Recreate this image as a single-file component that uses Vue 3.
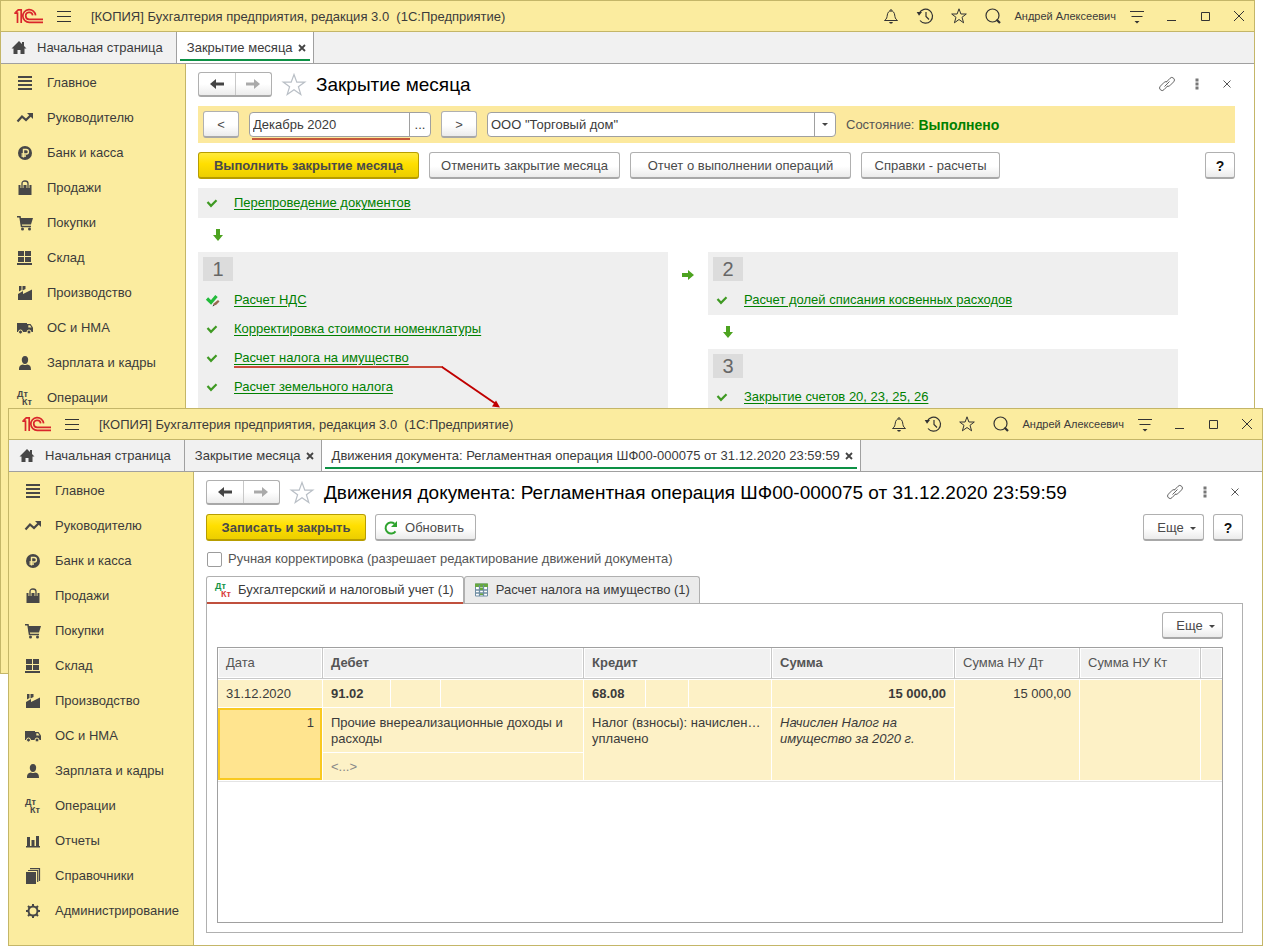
<script setup>
import { ref } from 'vue'

const icons = {
  logo: '<g fill="none" stroke="#d9262b" stroke-width="1.7"><path d="M.3 4.2h3.2V14M1.600 3.400 4.300.9h2.900V14"/><path d="M21.600 6.400A6.400 6.400 0 1 0 15.400 13.400H29M18.700 6.400A3.500 3.500 0 1 0 15.400 10.400H29"/></g>',
  burger: '<path d="M1 3.5h14M1 8.5h14M1 13.5h14" stroke="#333" fill="none"/>',
  bell: '<path d="M1.5 12.5h13c-2.5-1.7-2.4-3.2-2.8-5.500C11.300 4.500 10.300 3 8 3S4.700 4.500 4.300 7c-.4 2.300-.3 3.800-2.800 5.500zM7 3c0-2 2-2 2 0" fill="none" stroke="#333"/><path d="M6 14h4l-1 1.500H7z" fill="#333"/>',
  clock: '<path d="M2.300 5A7 7 0 1 1 3 12.500M9 4v4.500l3 3" fill="none" stroke="#333" stroke-width="1.200"/><path d="M-.3 4h5.300L2 7.800z" fill="#333"/>',
  star: '<path d="M8 .8 9.900 6h5.400L11 9.300l1.600 5.500L8 11.500l-4.600 3.300L5 9.300.7 6h5.400z" fill="none" stroke="#333"/>',
  search: '<circle cx="7.500" cy="7.500" r="6.500" fill="none" stroke="#333" stroke-width="1.200"/><path d="m11.500 11.500 3.500 3.500" stroke="#333" stroke-width="2.200"/>',
  filter: '<path d="M1 3.500h14M2.500 8.500h11" stroke="#333"/><path d="M5.500 13h5L8 15.500z" fill="#333"/>',
  min: '<path d="M4 12.500h9" stroke="#333"/>',
  max: '<path d="M4.500 4.500h8v8h-8z" fill="none" stroke="#333"/>',
  close: '<path d="m3 3 10 10M13 3 3 13" stroke="#333"/>',
  home: '<path d="M8 1 .5 8.500h2V14h4v-4h3v4h4V8.500h2L13 6V2h-2v2z" fill="#474747"/>',
  tabclose: '<path d="m1 1 6 6M7 1 1 7" stroke="#444" stroke-width="1.800"/>',
  left: '<path d="M15 8H5" stroke="#444" stroke-width="3"/><path d="M1 8l6-5v10z" fill="#444"/>',
  right: '<path d="M1 8h10" stroke="#aaa" stroke-width="3"/><path d="M15 8 9 3v10z" fill="#aaa"/>',
  bigstar: '<path d="m12 1.500 2.800 7.600h8l-6.400 4.700 2.400 7.800-6.800-4.800-6.800 4.800 2.400-7.800L1.200 9.100h8z" fill="none" stroke="#b9bfc6" stroke-width="1.200"/>',
  link: '<g fill="none" stroke="#666"><path d="M7 6.500 11 2.300a2.500 2.500 0 0 1 3.700 3.500l-4 4a2.500 2.500 0 0 1-2.500.6"/><path d="M9 9.500 5 13.700a2.500 2.500 0 0 1-3.700-3.500l4-4a2.500 2.500 0 0 1 2.500-.6"/><path d="m5.500 10.500 5-5"/></g>',
  dots: '<path d="M6.500 2.500h3v3h-3zM6.500 6.500h3v3h-3zM6.500 10.500h3v3h-3z" fill="#777"/>',
  smallclose: '<path d="m4.500 4.500 7 7M11.500 4.500l-7 7" stroke="#555"/>',
  list: '<path d="M1 2h14M1 6h14M1 10h14M1 14h14" stroke="#474747" stroke-width="2"/>',
  trend: '<path d="m.5 11.500 4.500-5 4 3.500 5-5" fill="none" stroke="#474747" stroke-width="2.200"/><path d="M10 3h6v6z" fill="#474747"/>',
  ruble: '<circle cx="8" cy="8" r="7" fill="#474747"/><path d="M6.500 12.500V4.500h2.700a2.200 2.200 0 0 1 0 4.500H4.500M4.500 11h4.500" fill="none" stroke="#faeb9e" stroke-width="1.400"/>',
  bag: '<path d="M1.500 5h13v10h-13z" fill="#474747"/><path d="M5 8V3.500Q5 1 8 1t3 2.500V8" fill="none" stroke="#faeb9e" stroke-width="3"/><path d="M5 8V3.500Q5 1 8 1t3 2.500V8" fill="none" stroke="#474747" stroke-width="1.300"/>',
  cart: '<path d="M0 1.800h3l1.500 9.700H14" fill="none" stroke="#474747" stroke-width="1.500"/><path d="M3 3h13l-2 6.500H4z" fill="#474747"/><circle cx="5.500" cy="14" r="1.500" fill="#474747"/><circle cx="12.500" cy="14" r="1.500" fill="#474747"/>',
  boxes: '<path d="M1 1h6v5H1zM8 1h6v5H8zM1 7h6v5H1zM8 7h6v5H8zM0 13h15v2H0z" fill="#474747"/>',
  factory: '<path d="M1 15V9l5-3v3l9-4.500V15zM2 1h2.500v4L2 6.500zM5.500 1h3v3l-3 1.500z" fill="#474747"/>',
  truck: '<path d="M0 3h10v9H0z" fill="#474747"/><path d="M10 4h3.500L16 7.500V12h-6z" fill="#474747"/><path d="M11.300 5.200h1.700l1.500 2.300h-3.200z" fill="#faeb9e"/><g fill="#474747" stroke="#faeb9e"><circle cx="3.500" cy="12" r="2"/><circle cx="12" cy="12" r="2"/></g>',
  person: '<path d="M8 1c4.500 0 4 8 0 8S3.500 1 8 1zM2 15c0-4 1-5 4-5.500q2 1 4 0c3 .5 4 1.500 4 5.500z" fill="#474747"/>',
  dtkt: '<g font-family="Liberation Sans, sans-serif" font-weight="700" font-size="9" fill="#474747"><text x="0" y="7">Дт</text><text x="5" y="15">Кт</text></g>',
  bars: '<path d="M1 13h14v1.500H1zM2 4h3v9H2zM6.500 7h3v6h-3zM11 3h3v10h-3z" fill="#474747"/>',
  books: '<path d="M1 4h10v12H1z" fill="#474747"/><path d="M3 2.500h9.700V14M5 .6h9.500V13" fill="none" stroke="#474747" stroke-width="1.200"/>',
  gear: '<circle cx="8" cy="8" r="4.500" fill="none" stroke="#474747" stroke-width="2"/><path d="M8 1v3M8 12v3M1 8h3M12 8h3M3 3l2 2M11 11l2 2M13 3l-2 2M5 11l-2 2" stroke="#474747" stroke-width="2"/>',
  check: '<path d="m3.500 7 3.500 3.800L12.500 5.300" fill="none" stroke="#3f9a23" stroke-width="2.200"/>',
  checkpen: '<path d="m3 6.500 4 4L12.500 4" fill="none" stroke="#22bb3b" stroke-width="3.200"/><path d="m9 13.500 1-2.300 4-3.200 1.500 1.500-3.500 3.500z" fill="#97694f"/><path d="m8.500 14.500 1-2 1 1z" fill="#333"/>',
  down: '<path d="M6 2h4v6h3l-5 6-5-6h3z" fill="#4da320"/>',
  next: '<path d="M2 6v4h6v3l6-5-6-5v3z" fill="#4da320"/>',
  refresh: '<path d="M12.500 11.300A5.500 5.500 0 1 1 11.500 3.700" fill="none" stroke="#2fa32f" stroke-width="2"/><path d="M14 1v6H8z" fill="#2fa32f"/>',
  dtktColor: '<g font-family="Liberation Sans, sans-serif" font-weight="700" font-size="9"><text x="0" y="7" fill="#159447">Дт</text><text x="6" y="15" fill="#d8403d">Кт</text></g>',
  sheet: '<path d="M2.500 2h12v12h-12z" fill="#fff" stroke="#6f8da3"/><path d="M2 1.500h13V5H2z" fill="#67a83f"/><path d="M2.500 8h12M2.500 11h12M6.500 3v11M10.500 3v11" stroke="#6f8da3" stroke-width="1.300"/><path d="M7 5.500h3V8H7zM7 11.500h3V13H7z" fill="#67a83f"/>'
}

const menu = [
  ['list', 'Главное'],
  ['trend', 'Руководителю'],
  ['ruble', 'Банк и касса'],
  ['bag', 'Продажи'],
  ['cart', 'Покупки'],
  ['boxes', 'Склад'],
  ['factory', 'Производство'],
  ['truck', 'ОС и НМА'],
  ['person', 'Зарплата и кадры'],
  ['dtkt', 'Операции'],
  ['bars', 'Отчеты'],
  ['books', 'Справочники'],
  ['gear', 'Администрирование']
]

const tools = [
  ['bell', 'Уведомления'],
  ['clock', 'История'],
  ['star', 'Избранное'],
  ['search', 'Поиск']
]
const frame = [
  ['filter', 'Сервис'],
  ['min', 'Свернуть'],
  ['max', 'Развернуть'],
  ['close', 'Закрыть']
]

const movement = 'Движения документа: Регламентная операция ШФ00-000075 от 31.12.2020 23:59:59'
const windows = [
  { id: 'closing', title: 'Закрытие месяца', tabs: ['Закрытие месяца'], menu: menu.slice(0, 10) },
  { id: 'movement', title: movement, tabs: ['Закрытие месяца', movement], menu }
]

const first = [
  ['checkpen', 'Расчет НДС'],
  ['check', 'Корректировка стоимости номенклатуры'],
  ['check', 'Расчет налога на имущество'],
  ['check', 'Расчет земельного налога']
]

const period = ref('Декабрь 2020')
const org = ref('ООО "Торговый дом"')
const manual = ref(false)
</script>

<template>
  <main class="desktop">
    <section v-for="w in windows" :key="w.id" class="window" :class="w.id">
      <header class="titlebar">
        <svg class="logo" viewBox="0 0 30 15" v-html="icons.logo" />
        <button class="plain" aria-label="Меню"><svg class="ico" viewBox="0 0 16 16" v-html="icons.burger" /></button>
        <span class="apptitle">[КОПИЯ] Бухгалтерия предприятия, редакция 3.0&nbsp; (1С:Предприятие)</span>
        <div class="tools">
          <button v-for="t in tools" :key="t[0]" class="plain" :aria-label="t[1]">
            <svg class="ico" viewBox="0 0 16 16" v-html="icons[t[0]]" />
          </button>
        </div>
        <span class="user">Андрей Алексеевич</span>
        <div class="tools frame">
          <button v-for="t in frame" :key="t[0]" class="plain" :aria-label="t[1]">
            <svg class="ico" viewBox="0 0 16 16" v-html="icons[t[0]]" />
          </button>
        </div>
      </header>

      <nav class="tabs">
        <a href="#" class="tab home"><svg class="ico" viewBox="0 0 16 16" v-html="icons.home" />Начальная страница</a>
        <div v-for="(t, i) in w.tabs" :key="t" class="tab" :class="{ active: i === w.tabs.length - 1 }">
          <a href="#">{{ t }}</a>
          <button class="plain" aria-label="Закрыть вкладку"><svg class="tabx" viewBox="0 0 8 8" v-html="icons.tabclose" /></button>
        </div>
      </nav>

      <div class="body">
        <nav class="side">
          <a v-for="m in w.menu" :key="m[1]" href="#"><svg class="ico" viewBox="0 0 16 16" v-html="icons[m[0]]" />{{ m[1] }}</a>
        </nav>

        <div class="content">
          <div class="head">
            <div class="navpair">
              <button aria-label="Назад"><svg class="ico" viewBox="0 0 16 16" v-html="icons.left" /></button>
              <button aria-label="Вперед"><svg class="ico" viewBox="0 0 16 16" v-html="icons.right" /></button>
            </div>
            <button class="plain" aria-label="В избранное"><svg class="bigstar" viewBox="0 0 24 24" v-html="icons.bigstar" /></button>
            <h1>{{ w.title }}</h1>
            <div class="headtools">
              <button class="plain" aria-label="Ссылка"><svg class="ico" viewBox="0 0 16 16" v-html="icons.link" /></button>
              <button class="plain" aria-label="Еще"><svg class="ico" viewBox="0 0 16 16" v-html="icons.dots" /></button>
              <button class="plain" aria-label="Закрыть"><svg class="ico" viewBox="0 0 16 16" v-html="icons.smallclose" /></button>
            </div>
          </div>

          <template v-if="w.id === 'closing'">
            <div class="period">
              <button class="btn step">&lt;</button>
              <div class="field date">
                <input v-model="period" type="text" aria-label="Период">
                <button class="pick" aria-label="Выбрать период">...</button>
              </div>
              <button class="btn step">&gt;</button>
              <div class="field org">
                <select v-model="org" aria-label="Организация"><option>ООО "Торговый дом"</option></select>
                <span class="drop"><i class="caret" /></span>
              </div>
              <span class="state">Состояние:</span>
              <strong class="done">Выполнено</strong>
            </div>

            <div class="bar">
              <button class="btn primary run">Выполнить закрытие месяца</button>
              <button class="btn undo">Отменить закрытие месяца</button>
              <button class="btn report">Отчет о выполнении операций</button>
              <button class="btn refs">Справки - расчеты</button>
              <button class="btn help">?</button>
            </div>

            <div class="flow">
              <div class="step-row lead"><svg class="ico" viewBox="0 0 16 16" v-html="icons.check" /><a href="#">Перепроведение документов</a></div>
              <div class="arrow"><svg class="ico" viewBox="0 0 16 16" v-html="icons.down" /></div>
              <div class="stages">
                <div class="stage">
                  <span class="num">1</span>
                  <div v-for="(s, i) in first" :key="s[1]" class="step-row">
                    <svg class="ico" viewBox="0 0 16 16" v-html="icons[s[0]]" /><a href="#">{{ s[1] }}</a>
                    <svg v-if="i === 2" class="callout" viewBox="0 0 270 46">
                      <path d="M0 3h209" stroke="#c94a3a" stroke-width="2" />
                      <path d="m208 3 54 37" stroke="#c00000" stroke-width="2" />
                      <path d="m266 43.500-8-1 4-6z" fill="#c00000" />
                    </svg>
                  </div>
                </div>
                <div class="between"><svg class="ico" viewBox="0 0 16 16" v-html="icons.next" /></div>
                <div class="column">
                  <div class="stage">
                    <span class="num">2</span>
                    <div class="step-row"><svg class="ico" viewBox="0 0 16 16" v-html="icons.check" /><a href="#">Расчет долей списания косвенных расходов</a></div>
                  </div>
                  <div class="arrow"><svg class="ico" viewBox="0 0 16 16" v-html="icons.down" /></div>
                  <div class="stage grow">
                    <span class="num">3</span>
                    <div class="step-row"><svg class="ico" viewBox="0 0 16 16" v-html="icons.check" /><a href="#">Закрытие счетов 20, 23, 25, 26</a></div>
                  </div>
                </div>
              </div>
            </div>
          </template>

          <template v-else>
            <div class="bar">
              <button class="btn primary save">Записать и закрыть</button>
              <button class="btn reload"><svg class="ico" viewBox="0 0 16 16" v-html="icons.refresh" />Обновить</button>
              <button class="btn more">Еще <i class="caret" /></button>
              <button class="btn help">?</button>
            </div>
            <label class="manual"><input v-model="manual" type="checkbox">Ручная корректировка (разрешает редактирование движений документа)</label>

            <div class="regs">
              <button class="reg current"><svg class="ico" viewBox="0 0 16 16" v-html="icons.dtktColor" />Бухгалтерский и налоговый учет (1)</button>
              <button class="reg"><svg class="ico" viewBox="0 0 16 16" v-html="icons.sheet" />Расчет налога на имущество (1)</button>
            </div>
            <div class="sheet">
              <button class="btn more">Еще <i class="caret" /></button>
              <div class="grid">
                <table>
                  <colgroup>
                    <col class="c-date"><col class="c-d1"><col class="c-d2"><col class="c-d3">
                    <col class="c-k1"><col class="c-k2"><col class="c-k3">
                    <col class="c-sum"><col class="c-nd"><col class="c-nk"><col>
                  </colgroup>
                  <thead>
                    <tr>
                      <th>Дата</th>
                      <th colspan="3" class="b">Дебет</th>
                      <th colspan="3" class="b">Кредит</th>
                      <th class="b">Сумма</th>
                      <th>Сумма НУ Дт</th>
                      <th>Сумма НУ Кт</th>
                      <th />
                    </tr>
                  </thead>
                  <tbody>
                    <tr class="top">
                      <td>31.12.2020</td>
                      <td class="b">91.02</td><td /><td />
                      <td class="b">68.08</td><td /><td />
                      <td class="b r">15 000,00</td>
                      <td rowspan="3" class="r">15 000,00</td>
                      <td rowspan="3" />
                      <td rowspan="3" />
                    </tr>
                    <tr class="tall">
                      <td rowspan="2" class="r selected">1</td>
                      <td colspan="3">Прочие внереализационные доходы и расходы</td>
                      <td colspan="3" rowspan="2">Налог (взносы): начислен… уплачено</td>
                      <td rowspan="2" class="note">Начислен Налог на имущество за 2020 г.</td>
                    </tr>
                    <tr><td colspan="3" class="empty">&lt;...&gt;</td></tr>
                  </tbody>
                </table>
              </div>
            </div>
          </template>
        </div>
      </div>
    </section>
  </main>
</template>

<style>
body { background: #fff; }
</style>

<style scoped>
* { box-sizing: border-box; }
.desktop {
  display: grid;
  grid-template-columns: minmax(0, 1fr);
  min-height: 100vh;
  font-family: "Liberation Sans", Arial, sans-serif;
  font-size: 13px;
  line-height: 16px;
  color: #3b3b3b;
}
button, input, select { font: inherit; color: inherit; margin: 0; }
a { color: inherit; text-decoration: none; }
svg { display: block; overflow: visible; }
.ico { width: 16px; height: 16px; flex: none; }
.window {
  grid-area: 1 / 1;
  display: flex;
  flex-direction: column;
  border: 1px solid #c4b668;
  background: #fff;
}
.closing { margin: 0 10px 273px 0; }
.movement { margin: 408px 2px 1px 8px; z-index: 1; }
.plain { display: flex; align-items: center; justify-content: center; padding: 0; border: 0; background: none; }

.titlebar {
  display: flex;
  align-items: center;
  height: 31px;
  padding: 0 7px 0 13px;
  border-bottom: 1px solid #c4b668;
  background: #fbec9f;
}
.logo { width: 30px; height: 15px; margin-right: 12px; }
.apptitle { flex: 1; margin-left: 19px; padding-top: 2px; white-space: nowrap; }
.tools { display: flex; gap: 18px; margin-right: 13px; }
.user { font-size: 11px; white-space: nowrap; }
.frame { margin: 0 0 0 13px; }

.tabs { display: flex; height: 32px; border-bottom: 1px solid #a0a0a0; background: #f1f1f1; }
.tab { display: flex; align-items: center; padding: 0 7px 0 10px; border-right: 1px solid #a0a0a0; white-space: nowrap; }
.tab.home { gap: 10px; padding-right: 13px; }
.tab .plain { margin-left: 5px; }
.tabx { width: 8px; height: 8px; }
.tab.active { position: relative; background: #fff; }
.tab.active::after { content: ""; position: absolute; left: 3px; right: 3px; bottom: 2px; height: 2px; background: #0d9145; }

.body { flex: 1; display: flex; min-height: 0; }
.side { flex: none; width: 185px; padding-top: 1px; border-right: 1px solid #c4b668; background: #fbec9f; }
.side a { display: flex; align-items: center; gap: 14px; height: 35px; padding-left: 16px; white-space: nowrap; }
.content { flex: 1; display: flex; flex-direction: column; min-width: 0; padding: 8px 19px 12px 12px; }

.head { display: flex; align-items: center; height: 25px; }
.navpair { display: flex; width: 74px; height: 25px; border: 1px solid #b0b0b0; border-bottom: 2px solid #a8a8a8; border-radius: 3px; background: linear-gradient(#fff 50%, #ececec); }
.navpair button { flex: 1; display: flex; align-items: center; justify-content: center; padding: 0; border: 0; background: none; }
.navpair button + button { border-left: 1px solid #c8c8c8; }
.bigstar { width: 24px; height: 24px; margin: 0 10px; }
h1 { flex: 1; margin: 0; font-size: 19px; font-weight: 400; line-height: 24px; color: #000; white-space: nowrap; }
.headtools { display: flex; gap: 14px; padding-bottom: 2px; }

.btn {
  display: flex;
  align-items: center;
  justify-content: center;
  height: 27px;
  padding: 2px 0 0;
  border: 1px solid #b0b0b0;
  border-bottom: 2px solid #a8a8a8;
  border-radius: 3px;
  background: linear-gradient(#fff 55%, #ebebeb);
  color: #4a4a4a;
  white-space: nowrap;
}
.primary { border-color: #b79d00; background: linear-gradient(#ffea3d, #ffdf00 45%, #ecce00); font-weight: 700; }
.caret { width: 0; height: 0; border: 3px solid transparent; border-top-color: #444; border-bottom: 0; }

.period { display: flex; align-items: center; gap: 10px; height: 37px; margin-top: 9px; padding-left: 5px; background: #fce99e; }
.step { width: 36px; }
.field { position: relative; display: flex; height: 25px; border: 1px solid #a0a0a0; border-radius: 4px; background: #fff; }
.date { width: 182px; }
.date::after { content: ""; position: absolute; left: 2px; right: 20px; bottom: -4px; height: 2px; background: #c65a3a; }
.field input { flex: 1; min-width: 0; padding: 0 3px; border: 0; background: none; outline: 0; }
.pick { width: 21px; padding: 0; border: 0; border-left: 1px solid #a0a0a0; background: none; }
.org { width: 349px; }
.field select { width: 100%; padding: 0 3px; border: 0; background: none; appearance: none; outline: 0; }
.drop { position: absolute; top: 0; right: 0; bottom: 0; display: flex; align-items: center; justify-content: center; width: 21px; border-left: 1px solid #a0a0a0; pointer-events: none; }
.state { color: #555; }
.done { margin-left: -6px; font-size: 14px; color: #008000; }

.bar { display: flex; gap: 10px; margin-top: 9px; }
.run { width: 221px; }
.undo { width: 191px; }
.report { width: 221px; }
.refs { width: 139px; }
.help { width: 30px; margin-left: auto; font-size: 14px; font-weight: 700; color: #111; }

.flow { flex: 1; display: flex; flex-direction: column; max-width: 980px; margin-top: 9px; }
.step-row { position: relative; display: flex; align-items: center; gap: 14px; height: 29px; padding-left: 6px; }
.step-row a { color: #008000; text-decoration: underline; text-underline-offset: 2px; }
.lead { height: 30px; background: #efefef; }
.arrow { display: flex; align-items: center; height: 34px; padding-left: 12px; }
.stages { flex: 1; display: grid; grid-template-columns: 1fr 40px 1fr; }
.column { display: flex; flex-direction: column; }
.stage { padding: 5px 0 1px; background: #efefef; }
.grow { flex: 1; }
.num { display: flex; align-items: center; justify-content: center; width: 30px; height: 24px; margin: 0 0 4px 5px; background: #dcdcdc; font-size: 20px; color: #666; }
.between { display: flex; justify-content: center; padding-top: 15px; }
.callout { position: absolute; left: 36px; top: 21px; width: 270px; height: 46px; }

.movement .bar { gap: 9px; }
.save { width: 160px; }
.reload { gap: 6px; width: 101px; padding-right: 4px; }
.more { gap: 6px; width: 61px; padding-left: 6px; }
.bar .more { margin-left: auto; }
.more + .help { margin-left: 0; }
.manual { display: flex; align-items: center; gap: 6px; margin-top: 10px; padding-left: 1px; color: #555; }
.manual input { width: 15px; height: 15px; border: 1px solid #9c9c9c; border-radius: 2px; background: #fff; appearance: none; }
.regs { display: flex; margin-top: 9px; }
.reg { position: relative; display: flex; align-items: center; gap: 7px; height: 27px; padding: 0 9px 0 8px; border: 1px solid #b0b0b0; border-bottom: 0; border-radius: 3px 3px 0 0; background: #ebebeb; white-space: nowrap; }
.current { background: #fff; }
.current::after { content: ""; position: absolute; left: 0; right: 0; bottom: -1px; z-index: 1; height: 2px; background: #c0503e; }
.sheet { flex: 1; display: flex; flex-direction: column; padding: 8px 19px 9px 10px; border: 1px solid #b0b0b0; }
.sheet .more { align-self: flex-end; }
.grid { flex: 1; margin-top: 8px; border: 1px solid #a0a0a0; }
table { width: 100%; table-layout: fixed; border-collapse: separate; border-spacing: 0; border-bottom: 1px solid #e4e4e4; }
.c-date { width: 105px; }
.c-d1 { width: 68px; }
.c-d2 { width: 50px; }
.c-d3 { width: 143px; }
.c-k1 { width: 62px; }
.c-k2 { width: 43px; }
.c-k3 { width: 83px; }
.c-sum { width: 183px; }
.c-nd { width: 125px; }
.c-nk { width: 121px; }
th { height: 31px; padding: 0 8px; border-right: 1px solid #c8c8c8; border-bottom: 1px solid #c8c8c8; box-shadow: inset 0 0 0 1px #fff; background: #f1f1f1; font-weight: 400; text-align: left; color: #555; }
td { height: 28px; padding: 6px 8px 5px; border-right: 1px solid #fff; border-bottom: 1px solid #fff; background: #fdf1c6; vertical-align: top; }
th:last-child, .top td:last-child { border-right: 0; }
.top td { height: 29px; border-top: 1px solid #fff; }
.tall td { height: 45px; padding: 7px 8px 5px; }
.b { font-weight: 700; }
.r { text-align: right; }
td.selected { box-shadow: inset 0 0 0 2px #f9c920; background: #ffe48f; }
.note { font-style: italic; }
.empty { color: #888; }
</style>
